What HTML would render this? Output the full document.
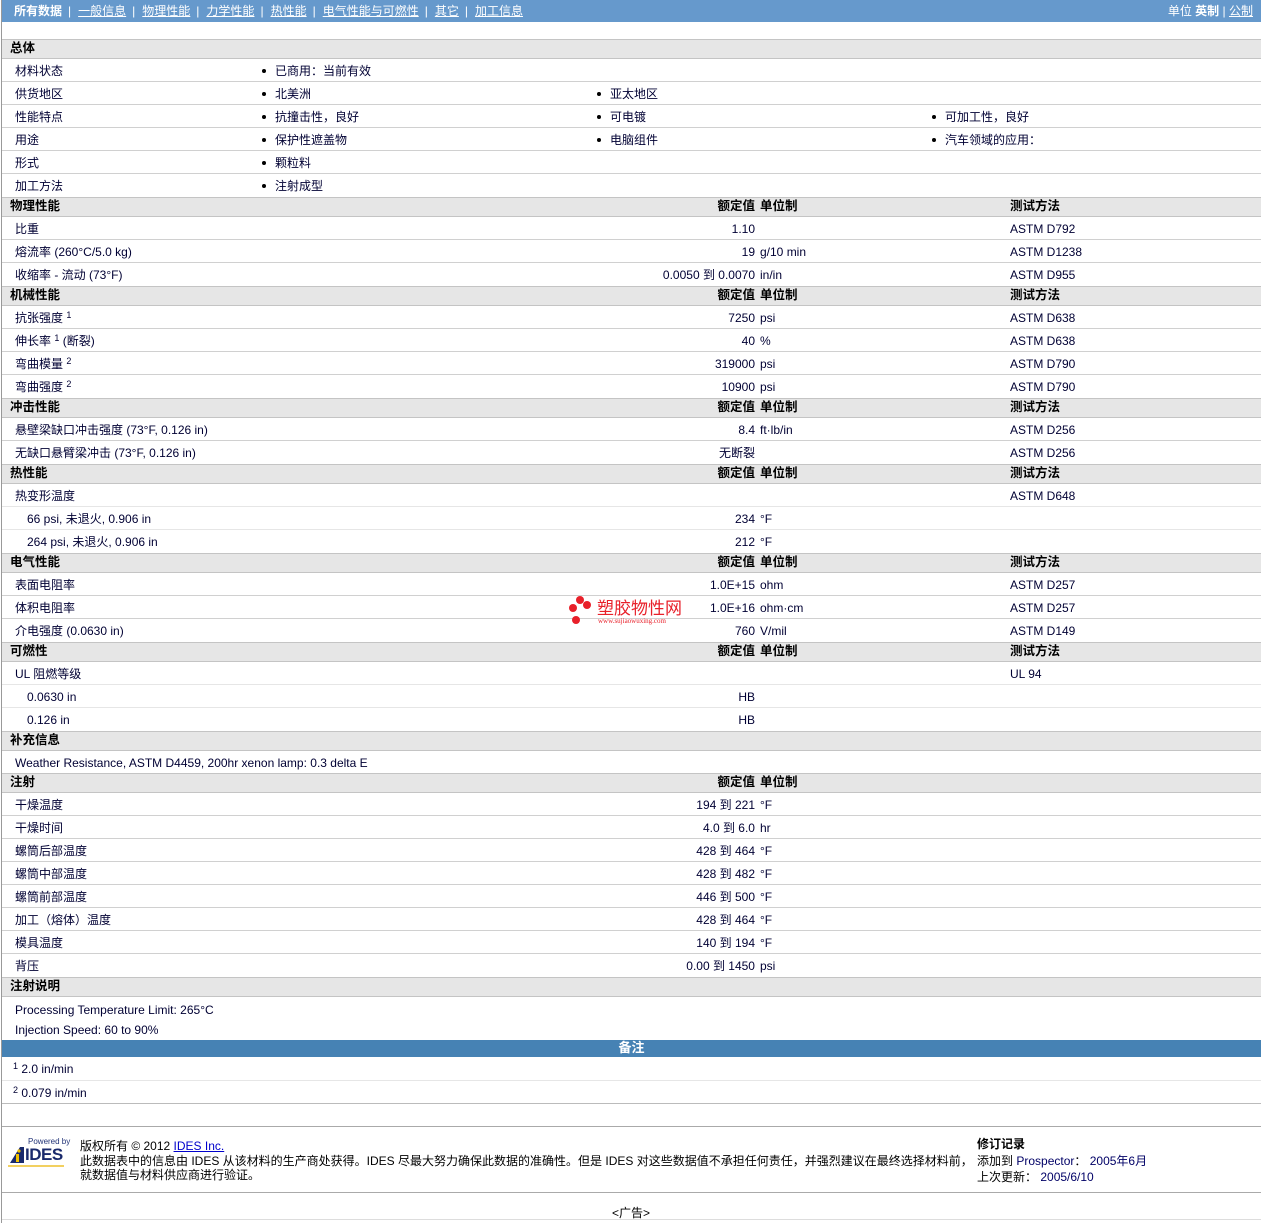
<!DOCTYPE html>
<html><head><meta charset="utf-8">
<style>
*{margin:0;padding:0;box-sizing:border-box}
body{width:1262px;height:1223px;background:#fff;font-family:"Liberation Sans","Noto Sans CJK SC",sans-serif;font-size:12px;color:#000033;position:relative;overflow:hidden}
.wrap{position:absolute;left:1px;top:0;width:1260px;height:1223px;border-left:1px solid #999}
.nav{height:22px;background:#6699cc;color:#fff;position:relative;font-size:12px}
.nav .l{position:absolute;left:12px;top:3px;white-space:nowrap;line-height:16px}
.nav .l a{color:#fff;text-decoration:underline}
.nav .l b{color:#fff}
.nav .l i{font-style:normal;margin:0 7px 0 6px}
.nav .r{position:absolute;right:8px;top:3px;white-space:nowrap;line-height:16px}
.r a{color:#fff;text-decoration:underline}
.gap{height:17px}
.sec{height:20px;background:#e6e6e6;border-top:1px solid #c4c4c4;border-bottom:1px solid #c4c4c4;position:relative;font-weight:bold;color:#000;font-size:12.5px}
.sec span{position:absolute;top:0;line-height:17px}
.row{height:23px;border-bottom:1px solid #d0d0d0;position:relative}
.row span{position:absolute;top:5px;white-space:nowrap;line-height:15px}
.sub{border-bottom:1px solid #e6e6e6}
.c1{left:13px}.c1s{left:25px}
.b{width:4px;height:4px;border-radius:50%;background:#000;top:10px!important}
.v{right:506px;text-align:right}
.u{left:758px}
.t{left:1008px}
.sv{right:506px}.su{left:758px}.st{left:1008px}
sup{font-size:9px;vertical-align:top;position:relative;top:-3px}
.blue{height:17px;background:#4682b4;color:#fff;text-align:center;font-weight:bold;font-size:13px;line-height:16px}
</style></head><body>
<div class="wrap">
<div class="nav"><div class="l"><b>所有数据</b><i>|</i><a>一般信息</a><i>|</i><a>物理性能</a><i>|</i><a>力学性能</a><i>|</i><a>热性能</a><i>|</i><a>电气性能与可燃性</a><i>|</i><a>其它</a><i>|</i><a>加工信息</a></div>
<div class="r">单位 <b>英制</b> | <a>公制</a></div></div>
<div class="gap"></div>

<div class="sec"><span style="left:8px">总体</span></div>
<div class="row"><span class="c1">材料状态</span><span class="b" style="left:260px"></span><span style="left:273px">已商用：当前有效</span></div>
<div class="row"><span class="c1">供货地区</span><span class="b" style="left:260px"></span><span style="left:273px">北美洲</span><span class="b" style="left:595px"></span><span style="left:608px">亚太地区</span></div>
<div class="row"><span class="c1">性能特点</span><span class="b" style="left:260px"></span><span style="left:273px">抗撞击性，良好</span><span class="b" style="left:595px"></span><span style="left:608px">可电镀</span><span class="b" style="left:930px"></span><span style="left:943px">可加工性，良好</span></div>
<div class="row"><span class="c1">用途</span><span class="b" style="left:260px"></span><span style="left:273px">保护性遮盖物</span><span class="b" style="left:595px"></span><span style="left:608px">电脑组件</span><span class="b" style="left:930px"></span><span style="left:943px">汽车领域的应用：</span></div>
<div class="row"><span class="c1">形式</span><span class="b" style="left:260px"></span><span style="left:273px">颗粒料</span></div>
<div class="row" style="border-bottom:none"><span class="c1">加工方法</span><span class="b" style="left:260px"></span><span style="left:273px">注射成型</span></div>

<div class="sec"><span style="left:8px">物理性能</span><span class="sv" style="right:506px">额定值</span><span class="su">单位制</span><span class="st">测试方法</span></div>
<div class="row"><span class="c1">比重</span><span class="v">1.10</span><span class="t">ASTM D792</span></div>
<div class="row"><span class="c1">熔流率 (260°C/5.0 kg)</span><span class="v">19</span><span class="u">g/10 min</span><span class="t">ASTM D1238</span></div>
<div class="row" style="border-bottom:none"><span class="c1">收缩率 - 流动 (73°F)</span><span class="v">0.0050 到 0.0070</span><span class="u">in/in</span><span class="t">ASTM D955</span></div>

<div class="sec"><span style="left:8px">机械性能</span><span class="sv">额定值</span><span class="su">单位制</span><span class="st">测试方法</span></div>
<div class="row"><span class="c1">抗张强度 <sup>1</sup></span><span class="v">7250</span><span class="u">psi</span><span class="t">ASTM D638</span></div>
<div class="row"><span class="c1">伸长率 <sup>1</sup> (断裂)</span><span class="v">40</span><span class="u">%</span><span class="t">ASTM D638</span></div>
<div class="row"><span class="c1">弯曲模量 <sup>2</sup></span><span class="v">319000</span><span class="u">psi</span><span class="t">ASTM D790</span></div>
<div class="row" style="border-bottom:none"><span class="c1">弯曲强度 <sup>2</sup></span><span class="v">10900</span><span class="u">psi</span><span class="t">ASTM D790</span></div>

<div class="sec"><span style="left:8px">冲击性能</span><span class="sv">额定值</span><span class="su">单位制</span><span class="st">测试方法</span></div>
<div class="row"><span class="c1">悬壁梁缺口冲击强度 (73°F, 0.126 in)</span><span class="v">8.4</span><span class="u">ft·lb/in</span><span class="t">ASTM D256</span></div>
<div class="row" style="border-bottom:none"><span class="c1">无缺口悬臂梁冲击 (73°F, 0.126 in)</span><span class="v">无断裂</span><span class="t">ASTM D256</span></div>

<div class="sec"><span style="left:8px">热性能</span><span class="sv">额定值</span><span class="su">单位制</span><span class="st">测试方法</span></div>
<div class="row sub"><span class="c1">热变形温度</span><span class="t">ASTM D648</span></div>
<div class="row sub"><span class="c1s">66 psi, 未退火, 0.906 in</span><span class="v">234</span><span class="u">°F</span></div>
<div class="row" style="border-bottom:none"><span class="c1s">264 psi, 未退火, 0.906 in</span><span class="v">212</span><span class="u">°F</span></div>

<div class="sec"><span style="left:8px">电气性能</span><span class="sv">额定值</span><span class="su">单位制</span><span class="st">测试方法</span></div>
<div class="row"><span class="c1">表面电阻率</span><span class="v">1.0E+15</span><span class="u">ohm</span><span class="t">ASTM D257</span></div>
<div class="row"><span class="c1">体积电阻率</span><span class="v">1.0E+16</span><span class="u">ohm·cm</span><span class="t">ASTM D257</span></div>
<div class="row" style="border-bottom:none"><span class="c1">介电强度 (0.0630 in)</span><span class="v">760</span><span class="u">V/mil</span><span class="t">ASTM D149</span></div>

<div class="sec"><span style="left:8px">可燃性</span><span class="sv">额定值</span><span class="su">单位制</span><span class="st">测试方法</span></div>
<div class="row sub"><span class="c1">UL 阻燃等级</span><span class="t">UL 94</span></div>
<div class="row sub"><span class="c1s">0.0630 in</span><span class="v">HB</span></div>
<div class="row" style="border-bottom:none"><span class="c1s">0.126 in</span><span class="v">HB</span></div>

<div class="sec"><span style="left:8px">补充信息</span></div>
<div class="row" style="height:22px;border-bottom:none"><span class="c1">Weather Resistance, ASTM D4459, 200hr xenon lamp: 0.3 delta E</span></div>

<div class="sec"><span style="left:8px">注射</span><span class="sv">额定值</span><span class="su">单位制</span></div>
<div class="row"><span class="c1">干燥温度</span><span class="v">194 到 221</span><span class="u">°F</span></div>
<div class="row"><span class="c1">干燥时间</span><span class="v">4.0 到 6.0</span><span class="u">hr</span></div>
<div class="row"><span class="c1">螺筒后部温度</span><span class="v">428 到 464</span><span class="u">°F</span></div>
<div class="row"><span class="c1">螺筒中部温度</span><span class="v">428 到 482</span><span class="u">°F</span></div>
<div class="row"><span class="c1">螺筒前部温度</span><span class="v">446 到 500</span><span class="u">°F</span></div>
<div class="row"><span class="c1">加工（熔体）温度</span><span class="v">428 到 464</span><span class="u">°F</span></div>
<div class="row"><span class="c1">模具温度</span><span class="v">140 到 194</span><span class="u">°F</span></div>
<div class="row" style="border-bottom:none"><span class="c1">背压</span><span class="v">0.00 到 1450</span><span class="u">psi</span></div>

<div class="sec"><span style="left:8px">注射说明</span></div>
<div style="height:43px;position:relative"><span style="position:absolute;left:13px;top:6px">Processing Temperature Limit: 265°C</span><span style="position:absolute;left:13px;top:26px">Injection Speed: 60 to 90%</span></div>
<div class="blue">备注</div>
<div class="row sub" style="height:24px"><span class="c1" style="left:11px"><sup>1</sup> 2.0 in/min</span></div>
<div class="row" style="border-bottom:1px solid #bbb"><span class="c1" style="left:11px"><sup>2</sup> 0.079 in/min</span></div>
<div style="height:23px;border-bottom:1px solid #aaa"></div>
<div style="height:66px;border-bottom:1px solid #aaa;position:relative;color:#000">
 <div style="position:absolute;left:6px;top:10px;width:52px;height:26px">
  <div style="position:absolute;left:20px;top:0;font-size:8px;color:#223377;white-space:nowrap">Powered by</div>
  <svg style="position:absolute;left:0;top:8px" width="20" height="20"><polygon points="2,18 12,2 16,2 16,18" fill="#1a2a6c"/><rect x="8" y="9" width="3" height="8" fill="#f2c200"/><circle cx="11" cy="6" r="1.6" fill="#f2c200"/></svg>
  <div style="position:absolute;left:17px;top:8px;font-size:17px;font-weight:bold;color:#1a2a6c;letter-spacing:-0.5px">IDES</div>
  <div style="position:absolute;left:0;top:28px;width:56px;height:2px;background:#f2d060"></div>
 </div>
 <div style="position:absolute;left:78px;top:10px;white-space:nowrap">版权所有 © 2012 <span style="color:#00c;text-decoration:underline">IDES Inc.</span></div>
 <div style="position:absolute;left:78px;top:25px;white-space:nowrap">此数据表中的信息由 IDES 从该材料的生产商处获得。IDES 尽最大努力确保此数据的准确性。但是 IDES 对这些数据值不承担任何责任，并强烈建议在最终选择材料前，</div>
 <div style="position:absolute;left:78px;top:39px;white-space:nowrap">就数据值与材料供应商进行验证。</div>
 <div style="position:absolute;left:975px;top:8px;font-weight:bold">修订记录</div>
 <div style="position:absolute;left:975px;top:25px;white-space:nowrap">添加到 <span style="color:#000066">Prospector</span>： <span style="color:#000066">2005年6月</span></div>
 <div style="position:absolute;left:975px;top:41px;white-space:nowrap">上次更新： <span style="color:#000066">2005/6/10</span></div>
</div>
<div style="height:27px;border-bottom:1px solid #ddd;position:relative"><span style="position:absolute;left:610px;top:11px;color:#000">&lt;广告&gt;</span></div>
</div>
<div style="position:absolute;left:566px;top:594px;width:140px;height:36px">
 <div style="position:absolute;left:10px;top:2px;width:8px;height:8px;border-radius:50%;background:#e8202a"></div>
 <div style="position:absolute;left:17px;top:7px;width:8px;height:8px;border-radius:50%;background:#e8202a"></div>
 <div style="position:absolute;left:3px;top:10px;width:8px;height:8px;border-radius:50%;background:#e8202a"></div>
 <div style="position:absolute;left:6px;top:22px;width:8px;height:8px;border-radius:50%;background:#e8202a"></div>
 <div style="position:absolute;left:31px;top:3px;font-size:17px;color:#e8202a;white-space:nowrap;font-family:'Noto Sans CJK SC',sans-serif;line-height:20px">塑胶物性网</div>
 <div style="position:absolute;left:32px;top:23px;font-size:7px;color:#e8202a;font-family:'Liberation Serif',serif;white-space:nowrap">www.sujiaowuxing.com</div>
</div>
</body></html>
